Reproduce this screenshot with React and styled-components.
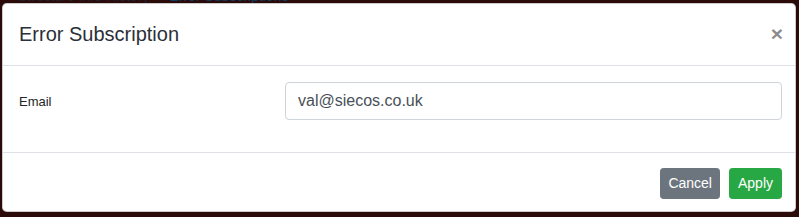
import styled, { createGlobalStyle } from "styled-components";

const GlobalStyle = createGlobalStyle`
  html, body {
    margin: 0;
    padding: 0;
    background: #2b0a0a;
  }
  body {
    font-family: "Liberation Sans", Arial, sans-serif;
    color: #212529;
  }
`;

const Page = styled.div`
  width: 799px;
  height: 217px;
  overflow: hidden;
  display: flex;
  flex-direction: column;
`;

// page underneath the modal, only the bottom of its text peeks out
const Behind = styled.div`
  height: 3px;
  overflow: hidden;
  display: flex;
  gap: 20px;
  padding-left: 18px;
  font-size: 14px;
  line-height: 14px;

  span {
    display: block;
    margin-top: -11px;
    color: #1c2230;
  }
  span.link {
    color: #0c3d5e;
  }
`;

const Modal = styled.div`
  margin-left: 2px;
  width: 792px;
  background: #fff;
  border: 1px solid rgba(0, 0, 0, 0.2);
  border-radius: 4.8px;
  display: flex;
  flex-direction: column;
`;

const Header = styled.div`
  display: flex;
  align-items: flex-start;
  justify-content: space-between;
  padding: 15px 16px 16px 16px;
  border-bottom: 1px solid #dee2e6;
`;

const Title = styled.h5`
  margin: 0;
  font-size: 20px;
  font-weight: 400;
  line-height: 30px;
  color: #2b3038;
`;

const Close = styled.button`
  border: 0;
  background: transparent;
  padding: 0;
  margin-right: -4px;
  font-family: "Liberation Sans", Arial, sans-serif;
  font-size: 21px;
  font-weight: 700;
  line-height: 30px;
  color: #000;
  opacity: 0.45;
  cursor: pointer;
`;

const Body = styled.div`
  padding: 16px 13px 32px 16px;
  border-bottom: 1px solid #dee2e6;
`;

const Row = styled.div`
  display: flex;
  align-items: center;
`;

const Label = styled.label`
  width: 266px;
  font-size: 13px;
  color: #212529;
`;

const Input = styled.input`
  flex: 1;
  box-sizing: border-box;
  height: 38px;
  padding: 6px 12px;
  font-family: "Liberation Sans", Arial, sans-serif;
  font-size: 16px;
  color: #495057;
  border: 1px solid #ced4da;
  border-radius: 4px;
  outline: none;
`;

const Footer = styled.div`
  display: flex;
  justify-content: flex-end;
  gap: 9px;
  padding: 15px 13px 12px 16px;
`;

const Button = styled.button`
  border: 1px solid ${(p) => (p.$variant === "success" ? "#28a745" : "#6c757d")};
  background: ${(p) => (p.$variant === "success" ? "#28a745" : "#6c757d")};
  color: #fff;
  font-family: "Liberation Sans", Arial, sans-serif;
  font-size: 14px;
  line-height: 21px;
  padding: 4px ${(p) => (p.$variant === "success" ? "8px" : "7px")};
  border-radius: 3.2px;
  cursor: pointer;
`;

function App() {
  return (
    <>
      <GlobalStyle />
      <Page>
        <Behind>
          <span>Structure Info History</span>
          <span className="link">Error Subscriptions</span>
        </Behind>
        <Modal>
          <Header>
            <Title>Error Subscription</Title>
            <Close aria-label="Close">×</Close>
          </Header>
          <Body>
            <Row>
              <Label>Email</Label>
              <Input defaultValue="val@siecos.co.uk" />
            </Row>
          </Body>
          <Footer>
            <Button>Cancel</Button>
            <Button $variant="success">Apply</Button>
          </Footer>
        </Modal>
      </Page>
    </>
  );
}

export default App;
